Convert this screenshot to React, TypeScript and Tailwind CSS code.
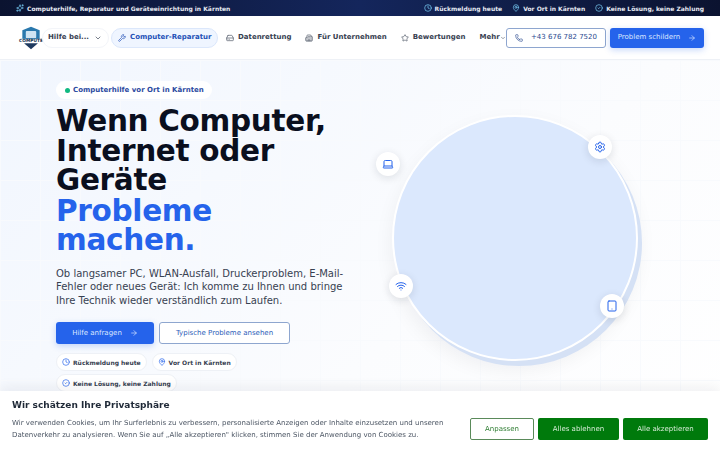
import {
  ArrowRight,
  Building2,
  ChevronDown,
  CircleCheck,
  Clock,
  HardDrive,
  Laptop,
  MapPin,
  Phone,
  Settings,
  Sparkles,
  Star,
  Tablet,
  Wifi,
  Wrench,
} from "lucide-react";

const topItems = [
  { icon: Clock, label: "Rückmeldung heute" },
  { icon: MapPin, label: "Vor Ort in Kärnten" },
  { icon: CircleCheck, label: "Keine Lösung, keine Zahlung" },
];

const navItems = [
  { icon: HardDrive, label: "Datenrettung" },
  { icon: Building2, label: "Für Unternehmen" },
  { icon: Star, label: "Bewertungen" },
];

function Logo() {
  return (
    <svg viewBox="0 0 30 28" className="h-[26px] w-[26px] shrink-0">
      <path d="M15 1 L25 5 L25 17 L5 17 L5 5 Z" fill="#2a78ad" />
      <rect x="9" y="6" width="12" height="8" rx="1" fill="#cfe3f2" />
      <rect x="0" y="15" width="30" height="5" fill="#ffffff" />
      <text x="15" y="19" textAnchor="middle" fontSize="5" fontWeight="700" fill="#16324f" fontFamily="'DejaVu Sans', sans-serif">
        COMPUTE
      </text>
      <path d="M7 20 L23 20 L15 27 Z" fill="#1e3a5f" />
    </svg>
  );
}

function TrustPill({ icon: Icon, label }: { icon: typeof Clock; label: string }) {
  return (
    <div className="flex h-[18px] items-center gap-[3px] whitespace-nowrap rounded-full border border-[#eef1f6] bg-white px-[5px] text-[6px] font-bold text-[#374151]">
      <Icon className="h-[8px] w-[8px] text-[#2563eb]" />
      {label}
    </div>
  );
}

function FloatIcon({ icon: Icon, className }: { icon: typeof Clock; className: string }) {
  return (
    <div className={`absolute flex h-[24px] w-[24px] items-center justify-center rounded-full bg-white shadow-[0_2px_8px_rgba(15,23,42,0.12)] ${className}`}>
      <Icon className="h-[12px] w-[12px] text-[#2563eb]" />
    </div>
  );
}

export default function App() {
  return (
    <div className="relative h-[450px] w-[720px] overflow-hidden bg-white font-['DejaVu_Sans',sans-serif]">
      <div className="flex h-[16px] items-center justify-between whitespace-nowrap bg-gradient-to-r from-[#0b1330] via-[#14265c] to-[#0b1330] pl-[16px] pr-[16px] text-[6px] font-bold text-[#e5e9f2]">
        <div className="flex items-center gap-[3px]">
          <Sparkles className="h-[8px] w-[8px] text-[#7dd3fc]" />
          Computerhilfe, Reparatur und Geräteeinrichtung in Kärnten
        </div>
        <div className="flex items-center gap-[10px]">
          {topItems.map((item) => (
            <div key={item.label} className="flex items-center gap-[3px]">
              <item.icon className="h-[8px] w-[8px] text-[#7dd3fc]" />
              {item.label}
            </div>
          ))}
        </div>
      </div>

      <header className="flex h-[44px] items-center whitespace-nowrap border-b border-[#eef1f6] bg-white pl-[18px] pr-[16px]">
        <Logo />
        <div className="ml-[-2px] flex h-[20px] w-[67px] shrink-0 items-center justify-between rounded-full border border-[#f3f5f9] bg-white pl-[5px] pr-[6px] text-[7px] font-bold text-[#374151]">
          Hilfe bei...
          <ChevronDown className="h-[8px] w-[8px]" />
        </div>
        <div className="ml-[2px] flex h-[20px] w-[107px] shrink-0 items-center gap-[4px] rounded-full border border-[#dbe7fb] bg-[#eff5ff] pl-[6px] text-[7px] font-bold text-[#2451b7]">
          <Wrench className="h-[8px] w-[8px]" />
          Computer-Reparatur
        </div>
        {navItems.map((item) => (
          <div key={item.label} className="ml-[8px] flex shrink-0 items-center gap-[4px] pr-[6px] text-[7px] font-bold text-[#374151]">
            <item.icon className="h-[8px] w-[8px] text-[#4b5563]" />
            {item.label}
          </div>
        ))}
        <div className="ml-[8px] flex shrink-0 items-center text-[7px] font-bold text-[#374151]">
          Mehr
          <ChevronDown className="h-[6px] w-[6px]" />
        </div>
        <div className="ml-auto flex h-[20px] w-[100px] shrink-0 items-center justify-center gap-[8px] rounded-[3px] border border-[#8ea6cf] bg-white text-[7px] text-[#2b4a8f]">
          <Phone className="h-[8px] w-[8px]" />
          +43 676 782 7520
        </div>
        <div className="ml-[4px] flex h-[20px] w-[94px] shrink-0 items-center justify-center gap-[8px] rounded-[3px] bg-[#2563eb] text-[7px] text-[#dbe7ff] shadow-[0_2px_6px_rgba(37,99,235,0.25)]">
          Problem schildern
          <ArrowRight className="h-[8px] w-[8px]" />
        </div>
      </header>

      <main className="relative h-[390px] bg-[linear-gradient(#f8fafd_1px,transparent_1px),linear-gradient(90deg,#f8fafd_1px,transparent_1px),linear-gradient(135deg,#f1f6fe,#fbfcfe_60%,#ffffff)] bg-[size:40px_40px,40px_40px,100%_100%] pl-[56px] pt-[21px]">
        <div className="flex h-[18px] w-fit items-center gap-[3px] rounded-full bg-white pl-[9px] pr-[8px] text-[7px] font-bold text-[#2b4a9f]">
          <span className="h-[5px] w-[5px] rounded-full bg-[#10b981]" />
          Computerhilfe vor Ort in Kärnten
        </div>
        <h1 className="mt-[8px] w-[290px] text-[29.5px] font-bold leading-[29.5px] tracking-[-0.3px] text-[#0a0f1e]">
          Wenn Computer, Internet oder Geräte
          <span className="block pt-[1px] text-[#2563eb]">Probleme machen.</span>
        </h1>
        <p className="mt-[11px] w-[295px] text-[10px] leading-[13.5px] text-[#374151]">
          Ob langsamer PC, WLAN-Ausfall, Druckerproblem, E-Mail-Fehler oder neues Gerät: Ich komme zu Ihnen und bringe Ihre Technik wieder verständlich zum Laufen.
        </p>
        <div className="mt-[15px] flex gap-[5px]">
          <div className="flex h-[22px] w-[98px] items-center justify-center gap-[8px] rounded-[3px] bg-[#2563eb] text-[7px] text-[#dbe7ff] shadow-[0_2px_6px_rgba(37,99,235,0.25)]">
            Hilfe anfragen
            <ArrowRight className="h-[8px] w-[8px]" />
          </div>
          <div className="flex h-[22px] w-[131px] items-center justify-center rounded-[3px] border border-[#8ea6cf] bg-white text-[7px] text-[#2b5cb8]">
            Typische Probleme ansehen
          </div>
        </div>
        <div className="mt-[9px] flex w-[240px] flex-wrap gap-x-[5px] gap-y-[3px]">
          <TrustPill icon={Clock} label="Rückmeldung heute" />
          <TrustPill icon={MapPin} label="Vor Ort in Kärnten" />
          <TrustPill icon={CircleCheck} label="Keine Lösung, keine Zahlung" />
        </div>

        <div className="absolute left-[392px] top-[55px] h-[246px] w-[246px] rounded-full border-[2px] border-white bg-[#dbe8fd] shadow-[4px_5px_0_#d5e1f5,0_8px_20px_rgba(15,23,42,0.06)]" />
        <FloatIcon icon={Laptop} className="left-[376px] top-[92px]" />
        <FloatIcon icon={Settings} className="left-[588px] top-[75px]" />
        <FloatIcon icon={Wifi} className="left-[389px] top-[214px]" />
        <FloatIcon icon={Tablet} className="left-[600px] top-[234px]" />
      </main>

      <div className="fixed bottom-0 left-0 right-0 flex h-[59px] items-end bg-white px-[12px] pb-[9px] shadow-[0_-4px_12px_rgba(15,23,42,0.06)]">
        <div className="w-[450px]">
          <div className="text-[9px] font-bold leading-[14px] text-[#1f2937]">Wir schätzen Ihre Privatsphäre</div>
          <p className="mt-[5px] text-[7px] leading-[12px] text-[#4b5563]">
            Wir verwenden Cookies, um Ihr Surferlebnis zu verbessern, personalisierte Anzeigen oder Inhalte einzusetzen und unseren Datenverkehr zu analysieren. Wenn Sie auf „Alle akzeptieren" klicken, stimmen Sie der Anwendung von Cookies zu.
          </p>
        </div>
        <div className="mb-px ml-auto flex gap-[4px] text-[7px]">
          <div className="flex h-[22px] w-[64px] items-center justify-center rounded-[2px] border border-[#5a8a5a] bg-white text-[#2e7d32]">Anpassen</div>
          <div className="flex h-[22px] w-[81px] items-center justify-center rounded-[2px] bg-[#007a0c] text-[#d7ecd8]">Alles ablehnen</div>
          <div className="flex h-[22px] w-[85px] items-center justify-center rounded-[2px] bg-[#007a0c] text-[#d7ecd8]">Alle akzeptieren</div>
        </div>
      </div>
    </div>
  );
}
